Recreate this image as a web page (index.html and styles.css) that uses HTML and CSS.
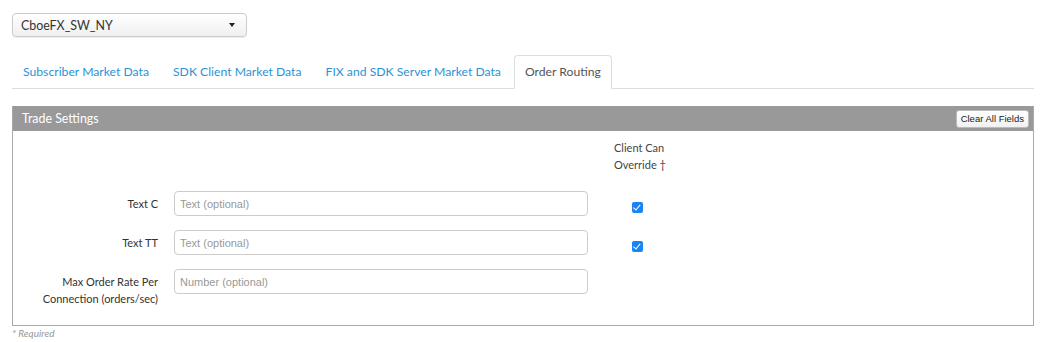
FILE: index.html
```html
<!DOCTYPE html>
<html>
<head>
<title>Order Routing</title>
<link rel="stylesheet" href="styles.css">
</head>
<body>
  <div class="page">
    <div class="select-box">
      <span class="select-value">CboeFX_SW_NY</span>
      <span class="caret"></span>
    </div>

    <ul class="tabs">
      <li class="tab"><a href="#">Subscriber Market Data</a></li>
      <li class="tab"><a href="#">SDK Client Market Data</a></li>
      <li class="tab"><a href="#">FIX and SDK Server Market Data</a></li>
      <li class="tab active"><a href="#">Order Routing</a></li>
    </ul>

    <div class="panel">
      <div class="panel-heading">
        <span class="panel-title">Trade Settings</span>
        <button class="clear-button">Clear All Fields</button>
      </div>
      <div class="panel-body">
        <div class="form-grid">
          <div></div>
          <div></div>
          <div class="override-head">Client Can<br>Override †</div>

          <label class="field-label">Text C</label>
          <input class="field-input" type="text" placeholder="Text (optional)">
          <input class="override-check" type="checkbox" checked>

          <label class="field-label">Text TT</label>
          <input class="field-input" type="text" placeholder="Text (optional)">
          <input class="override-check" type="checkbox" checked>

          <label class="field-label">Max Order Rate Per<br>Connection (orders/sec)</label>
          <input class="field-input" type="text" placeholder="Number (optional)">
          <div></div>
        </div>
      </div>
    </div>

    <div class="required-note">* Required</div>
  </div>
</body>
</html>
```

FILE: styles.css
```css
body {
  margin: 0;
  font-family: Lato, "Open Sans", sans-serif;
  color: #333;
  background: #fff;
}

.page {
  padding: 13px 9px 0 12px;
}

/* Venue dropdown */
.select-box {
  width: 235px;
  height: 24px;
  box-sizing: border-box;
  border: 1px solid #ccc;
  border-radius: 4px;
  background: linear-gradient(#fff, #efefef);
  box-shadow: 0 1px 1px rgba(0, 0, 0, 0.08);
  display: flex;
  align-items: center;
  justify-content: space-between;
  padding: 0 11px 0 8px;
  font-size: 12.4px;
  color: #333;
}

.caret {
  width: 0;
  height: 0;
  border-left: 3.5px solid transparent;
  border-right: 3.5px solid transparent;
  border-top: 4px solid #222;
}

/* Tabs */
.tabs {
  list-style: none;
  margin: 18px 0 0;
  padding: 0;
  display: flex;
  border-bottom: 1px solid #ddd;
}

.tab {
  margin-right: 2px;
  margin-bottom: -1px;
}

.tab a {
  display: block;
  height: 32px;
  line-height: 32px;
  padding: 0 10px;
  border: 1px solid transparent;
  border-radius: 4px 4px 0 0;
  font-size: 12.2px;
  color: #2b93d4;
  text-decoration: none;
}

.tab.active a {
  color: #555;
  border-color: #ddd;
  border-bottom-color: #fff;
  background: #fff;
}

/* Panel */
.panel {
  margin-top: 17px;
  border: 1px solid #aaa;
  border-top: none;
}

.panel-heading {
  height: 25px;
  background: #999;
  display: flex;
  align-items: center;
  justify-content: space-between;
  padding: 0 4px 0 9px;
}

.panel-title {
  color: #fff;
  font-size: 12.4px;
}

.clear-button {
  height: 18px;
  padding: 0 4px;
  border: 1px solid #bbb;
  border-radius: 3px;
  background: linear-gradient(#fff, #f1f1f1);
  font-family: "Liberation Sans", Arial, sans-serif;
  font-size: 9.5px;
  color: #222;
}

.panel-body {
  padding: 8px 0 18px;
}

.form-grid {
  display: grid;
  grid-template-columns: 145px 414px 66px;
  column-gap: 16px;
  row-gap: 14px;
}

.override-head {
  font-size: 11px;
  line-height: 17px;
  color: #444;
  padding-left: 10px;
  margin-bottom: 4px;
}

.field-label {
  font-size: 11px;
  line-height: 17px;
  text-align: right;
  padding-top: 4px;
  color: #333;
}

.field-input {
  height: 25px;
  box-sizing: border-box;
  border: 1px solid #ccc;
  border-radius: 4px;
  padding: 0 5px;
  font-family: "Liberation Sans", Arial, sans-serif;
  font-size: 11px;
  margin: 0;
}

.field-input::placeholder {
  color: #999;
}

.override-check {
  appearance: none;
  width: 11px;
  height: 11px;
  margin: 11px 0 0;
  justify-self: center;
  border-radius: 2px;
  background: #1a84f5;
  position: relative;
}

.override-check::after {
  content: "";
  position: absolute;
  left: 3.5px;
  top: 1px;
  width: 2.5px;
  height: 5.5px;
  border: solid #fff;
  border-width: 0 1.5px 1.5px 0;
  transform: rotate(40deg);
}

.required-note {
  margin-top: 1px;
  font-size: 10px;
  font-style: italic;
  color: #999;
}
```
